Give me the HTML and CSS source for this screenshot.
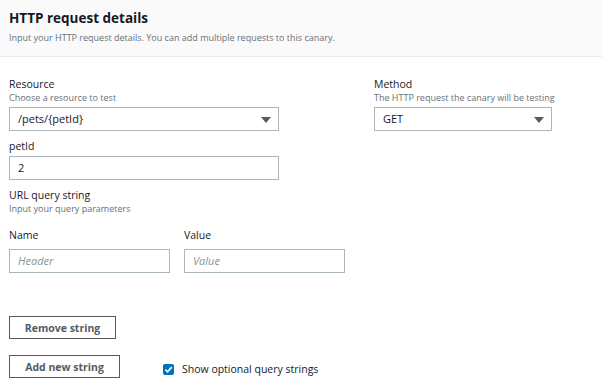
FILE: index.html
```html
<!DOCTYPE html>
<html lang="en">
<head>
  <meta charset="UTF-8" />
  <meta name="viewport" content="width=device-width, initial-scale=1" />
  <title>HTTP request details</title>
  <link rel="stylesheet" href="styles.css">
</head>
<body>
  <header class="panel-head">
    <h2>HTTP request details</h2>
    <p class="desc">Input your HTTP request details. You can add multiple requests to this canary.</p>
  </header>

  <div class="panel-body">
    <div class="row-top">
      <div class="col-left">
        <div class="field">
          <div class="label">Resource</div>
          <div class="desc">Choose a resource to test</div>
          <div class="select wide">/pets/{petId}<span class="caret"></span></div>
        </div>
        <div class="field">
          <div class="label">petId</div>
          <div class="input wide">2</div>
        </div>
      </div>
      <div class="col-right">
        <div class="field">
          <div class="label">Method</div>
          <div class="desc">The HTTP request the canary will be testing</div>
          <div class="select method">GET<span class="caret"></span></div>
        </div>
      </div>
    </div>

    <div class="field">
      <div class="label">URL query string</div>
      <div class="desc">Input your query parameters</div>
    </div>

    <div class="pair">
      <div>
        <div class="label strong">Name</div>
        <div class="input small placeholder">Header</div>
      </div>
      <div>
        <div class="label strong">Value</div>
        <div class="input small placeholder">Value</div>
      </div>
    </div>

    <button class="btn remove">Remove string</button>

    <div class="bottom">
      <button class="btn add">Add new string</button>
      <label class="check"><span class="box"><svg width="9" height="9" viewBox="0 0 10 10"><path d="M1.5 5.2 L4 7.6 L8.6 2.4" fill="none" stroke="#fff" stroke-width="1.8"/></svg></span>Show optional query strings</label>
    </div>
  </div>
</body>
</html>
```

FILE: styles.css
```css
body {
  margin: 0;
  font-family: "Open Sans", "Noto Sans", sans-serif;
  color: #16191f;
  background: #fff;
}
.panel-head {
  background: #fafafa;
  border-bottom: 1px solid #eaeded;
  padding: 8px 9px 12px;
  height: 36px;
}
.panel-head h2 {
  margin: 0;
  font-size: 13.5px;
  font-weight: 700;
  line-height: 20px;
}
.desc {
  margin: 0;
  font-size: 9px;
  line-height: 13px;
  color: #687078;
}
.panel-head .desc {
  margin-top: 3px;
}
.panel-body {
  padding: 20px 9px 0;
}
.row-top {
  display: flex;
}
.col-left {
  width: 365px;
}
.field {
  margin-bottom: 8px;
}
.label {
  font-size: 10.5px;
  line-height: 14px;
}
.label.strong {
  margin-bottom: 7px;
}
.select, .input {
  box-sizing: border-box;
  height: 24px;
  border: 1px solid #aab7b8;
  font-size: 11px;
  line-height: 22px;
  padding: 0 8px;
  position: relative;
  margin-top: 3px;
}
.wide { width: 270px; }
.method { width: 178px; }
.small { width: 161px; margin-top: 0; }
.placeholder {
  font-style: italic;
  color: #879596;
}
.caret {
  position: absolute;
  right: 7px;
  top: 9px;
  border-left: 5px solid transparent;
  border-right: 5px solid transparent;
  border-top: 6px solid #545b64;
}
.pair {
  display: flex;
  gap: 14px;
  margin-top: 13px;
}
.btn {
  display: block;
  box-sizing: border-box;
  height: 23px;
  padding: 0;
  white-space: nowrap;
  text-align: center;
  background: #fff;
  border: 1px solid #545b64;
  color: #545b64;
  font-family: inherit;
  font-size: 10.5px;
  font-weight: 700;
}
.remove {
  margin-top: 43px;
  width: 107px;
}
.bottom {
  display: flex;
  align-items: flex-end;
  margin-top: 16px;
}
.add { width: 111px; }
.check {
  display: flex;
  align-items: center;
  font-size: 10.5px;
  margin-left: 43px;
  margin-bottom: 2px;
}
.box {
  width: 11px;
  height: 11px;
  background: #0073bb;
  border-radius: 2px;
  display: flex;
  align-items: center;
  justify-content: center;
  margin-right: 8px;
}
```
